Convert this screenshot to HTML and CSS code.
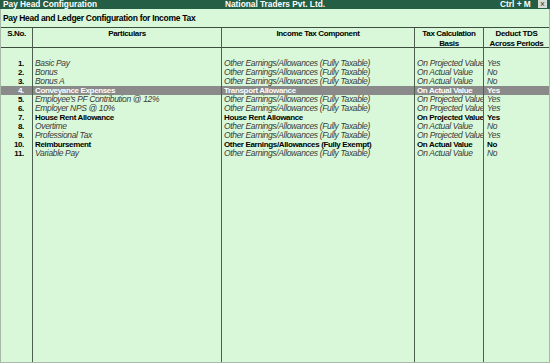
FILE: index.html
```html
<!DOCTYPE html>
<html lang="en">
<head>
    <meta charset="UTF-8">
    <title>Pay Head Configuration</title>
    <link rel="stylesheet" href="styles.css">
</head>
<body>
    <div class="window">
        <div class="titlebar">
            <span class="t-left">Pay Head Configuration</span>
            <span class="t-mid">National Traders Pvt. Ltd.</span>
            <span class="t-right">Ctrl + M <span class="close">&times;</span></span>
        </div>
        <div class="subtitle">Pay Head and Ledger Configuration for Income Tax</div>

        <div class="sheet">
            <div class="col c-no">
                <div class="head">S.No.</div>
                <div class="cells">
                    <div class="cell">1.</div>
                    <div class="cell">2.</div>
                    <div class="cell">3.</div>
                    <div class="cell hl">4.</div>
                    <div class="cell">5.</div>
                    <div class="cell">6.</div>
                    <div class="cell">7.</div>
                    <div class="cell">8.</div>
                    <div class="cell">9.</div>
                    <div class="cell">10.</div>
                    <div class="cell">11.</div>
                </div>
            </div>
            <div class="col c-part">
                <div class="head">Particulars</div>
                <div class="cells">
                    <div class="cell it">Basic Pay</div>
                    <div class="cell it">Bonus</div>
                    <div class="cell it">Bonus A</div>
                    <div class="cell hl">Conveyance Expenses</div>
                    <div class="cell it">Employee's PF Contribution @ 12%</div>
                    <div class="cell it">Employer NPS @ 10%</div>
                    <div class="cell bd">House Rent Allowance</div>
                    <div class="cell it">Overtime</div>
                    <div class="cell it">Professional Tax</div>
                    <div class="cell bd">Reimbursement</div>
                    <div class="cell it">Variable Pay</div>
                </div>
            </div>
            <div class="col c-comp">
                <div class="head">Income Tax Component</div>
                <div class="cells">
                    <div class="cell it">Other Earnings/Allowances (Fully Taxable)</div>
                    <div class="cell it">Other Earnings/Allowances (Fully Taxable)</div>
                    <div class="cell it">Other Earnings/Allowances (Fully Taxable)</div>
                    <div class="cell hl">Transport Allowance</div>
                    <div class="cell it">Other Earnings/Allowances (Fully Taxable)</div>
                    <div class="cell it">Other Earnings/Allowances (Fully Taxable)</div>
                    <div class="cell bd">House Rent Allowance</div>
                    <div class="cell it">Other Earnings/Allowances (Fully Taxable)</div>
                    <div class="cell it">Other Earnings/Allowances (Fully Taxable)</div>
                    <div class="cell bd">Other Earnings/Allowances (Fully Exempt)</div>
                    <div class="cell it">Other Earnings/Allowances (Fully Taxable)</div>
                </div>
            </div>
            <div class="col c-basis">
                <div class="head">Tax Calculation<br>Basis</div>
                <div class="cells">
                    <div class="cell it">On Projected Value</div>
                    <div class="cell it">On Actual Value</div>
                    <div class="cell it">On Actual Value</div>
                    <div class="cell hl">On Actual Value</div>
                    <div class="cell it">On Projected Value</div>
                    <div class="cell it">On Projected Value</div>
                    <div class="cell bd">On Projected Value</div>
                    <div class="cell it">On Actual Value</div>
                    <div class="cell it">On Projected Value</div>
                    <div class="cell bd">On Actual Value</div>
                    <div class="cell it">On Actual Value</div>
                </div>
            </div>
            <div class="col c-tds">
                <div class="head">Deduct TDS<br>Across Periods</div>
                <div class="cells">
                    <div class="cell it">Yes</div>
                    <div class="cell it">No</div>
                    <div class="cell it">No</div>
                    <div class="cell hl">Yes</div>
                    <div class="cell it">Yes</div>
                    <div class="cell it">Yes</div>
                    <div class="cell bd">Yes</div>
                    <div class="cell it">No</div>
                    <div class="cell it">Yes</div>
                    <div class="cell bd">No</div>
                    <div class="cell it">No</div>
                </div>
            </div>
        </div>
    </div>
</body>
</html>
```

FILE: styles.css
```css
body {
    margin: 0;
    padding: 0;
    font-family: "Liberation Sans", Arial, sans-serif;
    font-size: 8px;
    color: #000;
    background-color: #d9f8d9;
}

.window {
    width: 550px;
    height: 363px;
    box-sizing: border-box;
    display: flex;
    flex-direction: column;
    background-color: #d9f8d9;
    border-left: 1px solid #a9b9a9;
    border-right: 1px solid #a9b9a9;
    border-bottom: 1px solid #a9b9a9;
}

.titlebar {
    height: 9px;
    line-height: 9px;
    margin: 0 -1px;
    padding: 0 3px;
    display: grid;
    grid-template-columns: 1fr auto 1fr;
    background-color: #235e45;
    color: #fff;
    font-weight: bold;
    font-size: 8.3px;
    white-space: nowrap;
}

.t-right {
    justify-self: end;
}

.close {
    display: inline-block;
    width: 9px;
    height: 8px;
    line-height: 8px;
    margin-left: 5px;
    text-align: center;
    background-color: #d7dcd7;
    color: #333;
    font-weight: normal;
    vertical-align: top;
}

.subtitle {
    height: 18px;
    line-height: 19px;
    padding-left: 2px;
    font-weight: bold;
    font-size: 8.5px;
    letter-spacing: -0.3px;
}

.sheet {
    flex: 1;
    display: flex;
    border-top: 1px solid #3e4e3e;
}

.col {
    border-right: 1px solid #4e5e4e;
    display: flex;
    flex-direction: column;
}

.c-no { width: 31px; }
.c-part { width: 188px; }
.c-comp { width: 192px; }
.c-basis { width: 68px; }
.c-tds { flex: 1; border-right: none; }

.head {
    height: 20px;
    padding-top: 1px;
    box-sizing: border-box;
    line-height: 10px;
    text-align: center;
    font-weight: bold;
    letter-spacing: -0.35px;
    border-bottom: 1px solid #3e4e3e;
}

.cells {
    padding-top: 11px;
}

.cell {
    height: 9px;
    line-height: 9px;
    padding-left: 2px;
    white-space: nowrap;
    overflow: hidden;
    font-weight: bold;
    letter-spacing: -0.35px;
}

.c-no .cell {
    padding-left: 0;
    padding-right: 8px;
    text-align: right;
}

.c-tds .cell {
    padding-left: 3px;
}

.it {
    font-weight: normal;
    font-style: italic;
    font-size: 8.5px;
    color: #3a3a3a;
}

.hl {
    background-color: #8a8a8a;
    color: #fff;
}
```
